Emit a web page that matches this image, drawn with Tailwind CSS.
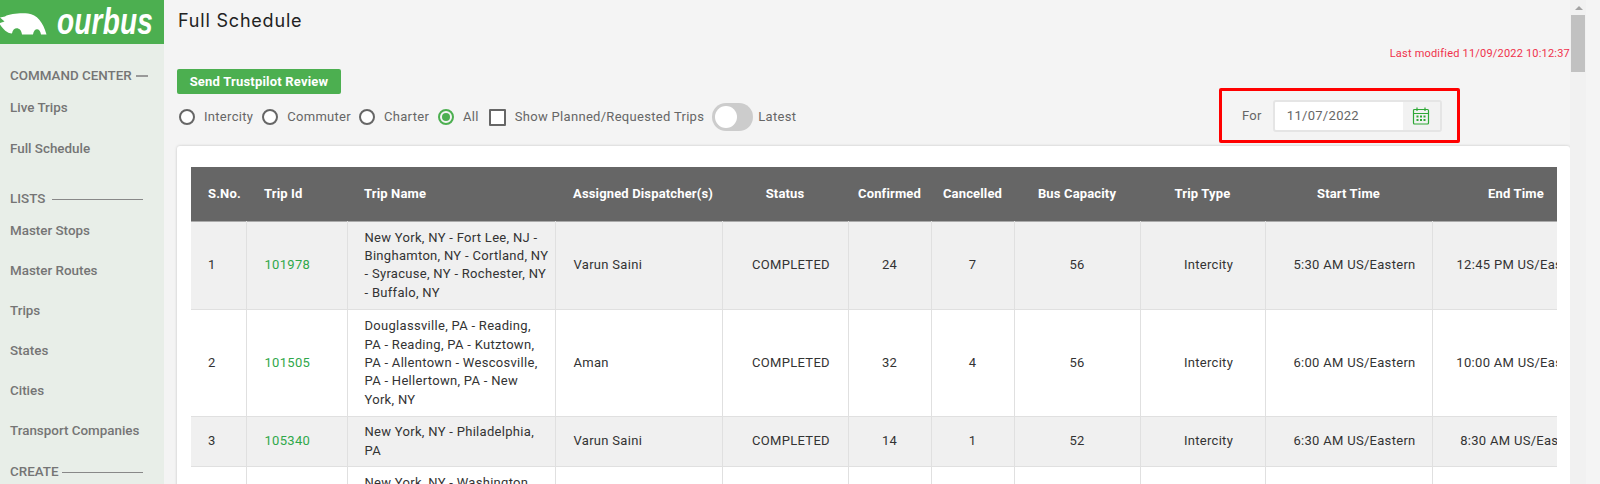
<!DOCTYPE html>
<html lang="en">
<head>
    <meta charset="UTF-8">
    <meta name="viewport" content="width=device-width, initial-scale=1.0">
    <title>Full Schedule</title>
    <script src="https://cdn.jsdelivr.net/npm/@tailwindcss/browser@4"></script>
</head>
<body class="bg-[#f4f4f4] font-['Roboto',sans-serif] text-[13px] tracking-[0.3px] text-[#333]">
<div class="flex h-[484px] w-[1600px] overflow-hidden">

    <!-- Sidebar -->
    <aside class="w-[164px] shrink-0 bg-[#e8eee8] text-[#757575]">
        <div class="flex h-[44px] items-center gap-[10px] bg-[#4caf50]">
            <svg class="mt-[4px] h-[24px] w-[47px] shrink-0" viewBox="0 0 47 24" fill="#fff">
                <path d="M0 5.500 L5 4.500 C10 1.500 20 1 28 1.500 C37 2.500 43 10 46.500 22.500 L41 22.500 C40 15.500 34 15.500 33 22.500 L22 22.500 C21 14.500 13 14.500 12 21.500 C7 21.500 3 17 0 12.500 L0 11 L4.500 9.500 Z"/>
            </svg>
            <span class="origin-center scale-y-[1.3] font-['Liberation_Sans',sans-serif] text-[28px] leading-none font-bold italic tracking-[0.2px] text-white">ourbus</span>
        </div>
        <nav class="pl-[10px] pr-[16px] text-[13.400px] font-medium leading-[20px] tracking-normal">
            <div class="mt-[22px] flex items-center gap-[4px]"><span class="shrink-0">COMMAND CENTER</span><span class="h-[2px] w-[13px] bg-[#999]"></span></div>
            <a class="mt-[12px] block">Live Trips</a>
            <a class="mt-[21px] block">Full Schedule</a>
            <div class="mt-[30px] flex items-center gap-[7px]"><span class="shrink-0">LISTS</span><span class="mr-[5px] h-px flex-1 bg-[#888]"></span></div>
            <a class="mt-[12px] block">Master Stops</a>
            <a class="mt-[20px] block">Master Routes</a>
            <a class="mt-[20px] block">Trips</a>
            <a class="mt-[20px] block">States</a>
            <a class="mt-[20px] block">Cities</a>
            <a class="mt-[20px] block whitespace-nowrap">Transport Companies</a>
            <div class="mt-[21px] flex items-center gap-[3px]"><span class="shrink-0">CREATE</span><span class="mr-[5px] h-px flex-1 bg-[#888]"></span></div>
        </nav>
    </aside>

    <!-- Main -->
    <main class="w-[1406px] shrink-0 pl-[13px]">
        <h1 class="pl-px pt-[9px] font-['Inter',sans-serif] text-[18px] leading-[24px] tracking-[0.8px] text-[#222]">Full Schedule</h1>
        <p class="mt-[13px] text-right text-[11px] leading-[16px] tracking-[0.2px] text-[#f0324b]">Last modified 11/09/2022 10:12:37</p>

        <div class="relative mt-[7px] h-[75px]">
            <button class="block h-[25px] w-[164px] rounded-[2px] bg-[#4caf50] text-[13px] font-bold tracking-[0.2px] text-white">Send Trustpilot Review</button>
            <div class="mt-[8px] flex h-[30px] items-center text-[#666]">
                <span class="ml-[2px] size-[16px] rounded-full border-2 border-[#666] bg-white"></span>
                <span class="ml-[9px]">Intercity</span>
                <span class="ml-[9px] size-[16px] rounded-full border-2 border-[#666] bg-white"></span>
                <span class="ml-[9px]">Commuter</span>
                <span class="ml-[8px] size-[16px] rounded-full border-2 border-[#666] bg-white"></span>
                <span class="ml-[9px]">Charter</span>
                <span class="ml-[9px] flex size-[16px] items-center justify-center rounded-full border-2 border-[#4caf50]"><span class="size-[8px] rounded-full bg-[#4caf50]"></span></span>
                <span class="ml-[9px]">All</span>
                <span class="ml-[10px] size-[17px] rounded-[1px] border-2 border-[#666] bg-white"></span>
                <span class="ml-[9px] whitespace-nowrap">Show Planned/Requested Trips</span>
                <span class="ml-[8px] flex h-[28px] w-[41px] items-center rounded-full bg-[#ccc] pl-[3px]"><span class="size-[22px] rounded-full bg-white"></span></span>
                <span class="ml-[5px]">Latest</span>
            </div>

            <!-- date filter, highlighted with the red box -->
            <div class="absolute left-[1042px] top-[19px] flex h-[55px] w-[241px] items-center rounded-[2px] border-[3px] border-[#f00] pl-[20px]">
                <span class="text-[#666]">For</span>
                <div class="ml-[11px] flex h-[32px] w-[169px] items-center rounded-[3px] border-2 border-[#e5e5e5] bg-white">
                    <span class="flex-1 pl-[12px] text-[#666]">11/07/2022</span>
                    <span class="flex h-full w-[37px] items-center justify-center bg-[#f2f2f2]">
                        <svg class="size-[18px]" viewBox="0 0 18 18" fill="none" stroke="#2ea836" stroke-width="1.200">
                            <rect x="1.500" y="2.500" width="15" height="14.500" rx="1"/>
                            <path d="M1.500 6.500h15M5 .5v3.500M13 .5v3.500"/>
                            <path stroke-width="2" stroke-dasharray="2 1.500" d="M4.500 9.500h9.500M4.500 13h9.500"/>
                        </svg>
                    </span>
                </div>
            </div>
        </div>

        <!-- Card -->
        <section class="mt-[2px] h-[400px] w-[1393px] rounded-[3px] bg-white px-[14px] pt-[21px] shadow-[0_0_3px_rgba(0,0,0,0.2)]">
            <div class="w-[1366px] overflow-hidden">
                <table class="w-[1409px] table-fixed border-collapse text-[13px] leading-[18.400px]">
                    <colgroup>
                        <col class="w-[55px]"><col class="w-[101px]"><col class="w-[208px]"><col class="w-[167px]"><col class="w-[126px]"><col class="w-[83px]"><col class="w-[83px]"><col class="w-[126px]"><col class="w-[125px]"><col class="w-[167px]"><col class="w-[168px]">
                    </colgroup>
                    <thead class="bg-[#666] font-bold tracking-[0.15px] text-white">
                        <tr class="h-[54px] border-b border-[#aaa]">
                            <th class="pl-[17px] text-left">S.No.</th>
                            <th class="pl-[18px] text-left">Trip Id</th>
                            <th class="pl-[17px] text-left">Trip Name</th>
                            <th class="pl-[18px] text-left whitespace-nowrap">Assigned Dispatcher(s)</th>
                            <th>Status</th>
                            <th>Confirmed</th>
                            <th>Cancelled</th>
                            <th>Bus Capacity</th>
                            <th>Trip Type</th>
                            <th>Start Time</th>
                            <th>End Time</th>
                        </tr>
                    </thead>
                    <tbody>
                        <tr class="border-b border-[#e0e0e0] bg-[#f0f0f0]">
                            <td class="border-r border-[#e0e0e0] pl-[17px]">1</td>
                            <td class="border-r border-[#e0e0e0] pl-[18px] text-[#2fa84a]">101978</td>
                            <td class="border-r border-[#e0e0e0] py-[7px] pl-[17px] pr-[1px]">New York, NY - Fort Lee, NJ -<br>Binghamton, NY - Cortland, NY<br>- Syracuse, NY - Rochester, NY<br>- Buffalo, NY</td>
                            <td class="border-r border-[#e0e0e0] pl-[18px]">Varun Saini</td>
                            <td class="border-r border-[#e0e0e0] pl-[12px] text-center">COMPLETED</td>
                            <td class="border-r border-[#e0e0e0] text-center">24</td>
                            <td class="border-r border-[#e0e0e0] text-center">7</td>
                            <td class="border-r border-[#e0e0e0] text-center">56</td>
                            <td class="border-r border-[#e0e0e0] pl-[12px] text-center">Intercity</td>
                            <td class="border-r border-[#e0e0e0] pl-[12px] text-center">5:30 AM US/Eastern</td>
                            <td class="pl-[10px] text-center whitespace-nowrap">12:45 PM US/Eastern</td>
                        </tr>
                        <tr class="border-b border-[#e0e0e0] bg-white">
                            <td class="border-r border-[#e0e0e0] pl-[17px]">2</td>
                            <td class="border-r border-[#e0e0e0] pl-[18px] text-[#2fa84a]">101505</td>
                            <td class="border-r border-[#e0e0e0] py-[7px] pl-[17px] pr-[1px]">Douglassville, PA - Reading,<br>PA - Reading, PA - Kutztown,<br>PA - Allentown - Wescosville,<br>PA - Hellertown, PA - New<br>York, NY</td>
                            <td class="border-r border-[#e0e0e0] pl-[18px]">Aman</td>
                            <td class="border-r border-[#e0e0e0] pl-[12px] text-center">COMPLETED</td>
                            <td class="border-r border-[#e0e0e0] text-center">32</td>
                            <td class="border-r border-[#e0e0e0] text-center">4</td>
                            <td class="border-r border-[#e0e0e0] text-center">56</td>
                            <td class="border-r border-[#e0e0e0] pl-[12px] text-center">Intercity</td>
                            <td class="border-r border-[#e0e0e0] pl-[12px] text-center">6:00 AM US/Eastern</td>
                            <td class="pl-[10px] text-center whitespace-nowrap">10:00 AM US/Eastern</td>
                        </tr>
                        <tr class="border-b border-[#e0e0e0] bg-[#f0f0f0]">
                            <td class="border-r border-[#e0e0e0] pl-[17px]">3</td>
                            <td class="border-r border-[#e0e0e0] pl-[18px] text-[#2fa84a]">105340</td>
                            <td class="border-r border-[#e0e0e0] py-[6px] pl-[17px] pr-[1px]">New York, NY - Philadelphia,<br>PA</td>
                            <td class="border-r border-[#e0e0e0] pl-[18px]">Varun Saini</td>
                            <td class="border-r border-[#e0e0e0] pl-[12px] text-center">COMPLETED</td>
                            <td class="border-r border-[#e0e0e0] text-center">14</td>
                            <td class="border-r border-[#e0e0e0] text-center">1</td>
                            <td class="border-r border-[#e0e0e0] text-center">52</td>
                            <td class="border-r border-[#e0e0e0] pl-[12px] text-center">Intercity</td>
                            <td class="border-r border-[#e0e0e0] pl-[12px] text-center">6:30 AM US/Eastern</td>
                            <td class="pl-[10px] text-center whitespace-nowrap">8:30 AM US/Eastern</td>
                        </tr>
                        <tr class="h-[60px] bg-white align-top">
                            <td class="border-r border-[#e0e0e0]"></td>
                            <td class="border-r border-[#e0e0e0]"></td>
                            <td class="border-r border-[#e0e0e0] py-[7px] pl-[17px] pr-[1px]">New York, NY - Washington</td>
                            <td class="border-r border-[#e0e0e0]"></td>
                            <td class="border-r border-[#e0e0e0]"></td>
                            <td class="border-r border-[#e0e0e0]"></td>
                            <td class="border-r border-[#e0e0e0]"></td>
                            <td class="border-r border-[#e0e0e0]"></td>
                            <td class="border-r border-[#e0e0e0]"></td>
                            <td class="border-r border-[#e0e0e0]"></td>
                            <td></td>
                        </tr>
                    </tbody>
                </table>
            </div>
        </section>
    </main>

    <!-- Scrollbar -->
    <div class="w-[16px] shrink-0 bg-[#f1f1f1] pl-px">
        <div class="flex h-[15px] items-center justify-center">
            <span class="h-0 w-0 border-x-[4px] border-b-[4px] border-x-transparent border-b-[#a3a3a3]"></span>
        </div>
        <div class="h-[57px] w-[14px] bg-[#c1c1c1]"></div>
    </div>
</div>
</body>
</html>
